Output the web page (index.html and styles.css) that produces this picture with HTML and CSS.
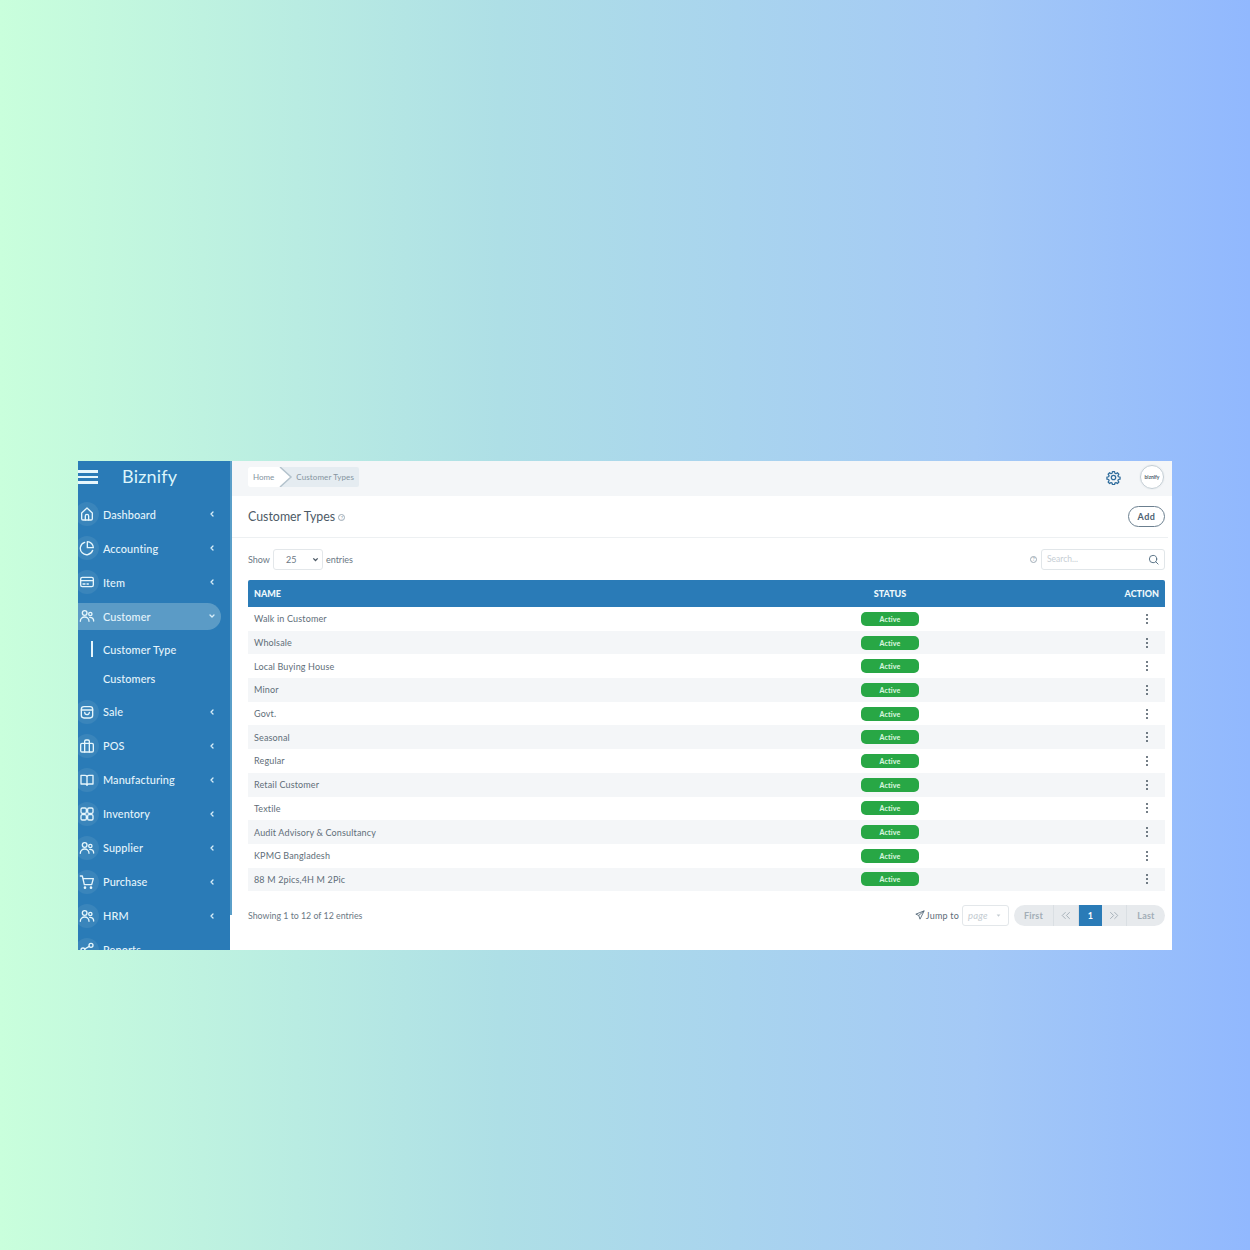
FILE: index.html
```html
<!DOCTYPE html>
<html lang="en">
<head>
<meta charset="utf-8">
<title>Biznify - Customer Types</title>
<link rel="stylesheet" href="styles.css">
</head>
<body>
<svg class="sprite" width="0" height="0" aria-hidden="true">
  <symbol id="i-home" viewBox="0 0 24 24"><path d="M4 10.500 12 3l8 7.500V19a2 2 0 0 1-2 2H6a2 2 0 0 1-2-2z"/><path d="M9.500 21v-6a2.500 2.500 0 0 1 5 0v6"/></symbol>
  <symbol id="i-pie" viewBox="0 0 24 24"><path d="M20.500 15.500A9.500 9.500 0 1 1 8.500 3.500"/><path d="M12.500 2.500a9 9 0 0 1 9 9h-9z"/></symbol>
  <symbol id="i-card" viewBox="0 0 24 24"><rect x="2.500" y="5" width="19" height="14" rx="2.500"/><path d="M2.500 10h19M6 15h3M12 15h2"/></symbol>
  <symbol id="i-users" viewBox="0 0 24 24"><circle cx="8.500" cy="7.500" r="3.500"/><path d="M2 20c0-4 3-6.500 6.500-6.500S15 16 15 20"/><circle cx="17" cy="9" r="2.500"/><path d="M16 14c3.500 0 6 2 6 5.500"/></symbol>
  <symbol id="i-bag" viewBox="0 0 24 24"><rect x="3.500" y="4" width="17" height="17" rx="4"/><path d="M3.500 9h17M8.500 12.500a3.500 3.500 0 0 0 7 0"/></symbol>
  <symbol id="i-case" viewBox="0 0 24 24"><rect x="2.500" y="8" width="19" height="13" rx="2"/><path d="M8.500 21V5a2 2 0 0 1 2-2h3a2 2 0 0 1 2 2v16"/></symbol>
  <symbol id="i-book" viewBox="0 0 24 24"><path d="M3 5h6a3 3 0 0 1 3 3v12a2.500 2.500 0 0 0-2.500-2H3zM21 5h-6a3 3 0 0 0-3 3v12a2.500 2.500 0 0 1 2.500-2H21z"/></symbol>
  <symbol id="i-grid" viewBox="0 0 24 24"><rect x="3" y="3" width="8" height="8" rx="2"/><rect x="13" y="3" width="8" height="8" rx="2"/><rect x="3" y="13" width="8" height="8" rx="2"/><rect x="13" y="13" width="8" height="8" rx="2"/></symbol>
  <symbol id="i-cart" viewBox="0 0 24 24"><path d="M2 3h3l3 13h11l2.500-9H6"/><circle cx="9" cy="20.500" r="1"/><circle cx="18" cy="20.500" r="1"/></symbol>
  <symbol id="i-share" viewBox="0 0 24 24"><circle cx="6" cy="12" r="3"/><circle cx="18" cy="5" r="3"/><circle cx="18" cy="19" r="3"/><path d="m8.500 10.500 7-4M8.500 13.500l7 4"/></symbol>
  <symbol id="i-chev" viewBox="0 0 8 8"><path d="M5 2 3 4l2 2"/></symbol>
</svg>

<div class="app">
  <aside class="sidebar">
    <div class="brand">
      <span class="burger"><i></i><i></i><i></i></span>
      <span class="brand-name">Biznify</span>
    </div>
    <nav class="menu">
      <a class="item"><span class="disc"><svg class="ico"><use href="#i-home"/></svg></span><span class="label">Dashboard</span><svg class="chev"><use href="#i-chev"/></svg></a>
      <a class="item"><span class="disc"><svg class="ico"><use href="#i-pie"/></svg></span><span class="label">Accounting</span><svg class="chev"><use href="#i-chev"/></svg></a>
      <a class="item"><span class="disc"><svg class="ico"><use href="#i-card"/></svg></span><span class="label">Item</span><svg class="chev"><use href="#i-chev"/></svg></a>
      <a class="item open"><span class="disc"><svg class="ico"><use href="#i-users"/></svg></span><span class="label">Customer</span><svg class="chev down"><use href="#i-chev"/></svg></a>
      <div class="subs">
        <a class="sub current"><span class="label">Customer Type</span></a>
        <a class="sub"><span class="label">Customers</span></a>
      </div>
      <a class="item"><span class="disc"><svg class="ico"><use href="#i-bag"/></svg></span><span class="label">Sale</span><svg class="chev"><use href="#i-chev"/></svg></a>
      <a class="item"><span class="disc"><svg class="ico"><use href="#i-case"/></svg></span><span class="label">POS</span><svg class="chev"><use href="#i-chev"/></svg></a>
      <a class="item"><span class="disc"><svg class="ico"><use href="#i-book"/></svg></span><span class="label">Manufacturing</span><svg class="chev"><use href="#i-chev"/></svg></a>
      <a class="item"><span class="disc"><svg class="ico"><use href="#i-grid"/></svg></span><span class="label">Inventory</span><svg class="chev"><use href="#i-chev"/></svg></a>
      <a class="item"><span class="disc"><svg class="ico"><use href="#i-users"/></svg></span><span class="label">Supplier</span><svg class="chev"><use href="#i-chev"/></svg></a>
      <a class="item"><span class="disc"><svg class="ico"><use href="#i-cart"/></svg></span><span class="label">Purchase</span><svg class="chev"><use href="#i-chev"/></svg></a>
      <a class="item"><span class="disc"><svg class="ico"><use href="#i-users"/></svg></span><span class="label">HRM</span><svg class="chev"><use href="#i-chev"/></svg></a>
      <a class="item"><span class="disc"><svg class="ico"><use href="#i-share"/></svg></span><span class="label">Reports</span></a>
    </nav>
  </aside>

  <main class="main">
    <header class="topbar">
      <div class="crumbs">
        <span class="crumb-home">Home</span>
        <svg class="crumb-arrow" viewBox="0 0 14 20"><path class="crumb-fill" d="M0 0h1l11 10L1 20H0z"/><path class="crumb-line" d="M1 0l11 10L1 20"/></svg>
        <span class="crumb-here">Customer Types</span>
      </div>
      <div class="top-actions">
        <svg class="gear" viewBox="0 0 24 24"><path d="M10.300 2.500h3.400l.5 2.700 1.700.7 2.300-1.500 2.400 2.400-1.500 2.300.7 1.700 2.700.5v3.400l-2.700.5-.7 1.700 1.500 2.300-2.400 2.400-2.300-1.500-1.700.7-.5 2.700h-3.400l-.5-2.700-1.700-.7-2.300 1.500-2.400-2.400 1.500-2.300-.7-1.700-2.700-.5v-3.400l2.700-.5.7-1.700-1.500-2.300 2.400-2.400 2.300 1.500 1.700-.7z"/><circle cx="12" cy="12" r="3.500"/></svg>
        <span class="avatar"><span class="avatar-text">biznify</span></span>
      </div>
    </header>

    <section class="title-row">
      <h1 class="title">Customer Types <span class="help help-title">?</span></h1>
      <button class="add">Add</button>
    </section>

    <section class="content">
      <div class="toolbar">
        <div class="length">
          <span>Show</span>
          <span class="select">25<svg class="select-chev" viewBox="0 0 8 8"><path d="M1.500 2.700 4 5.200l2.500-2.500"/></svg></span>
          <span>entries</span>
        </div>
        <div class="search-wrap">
          <span class="help help-search">?</span>
          <div class="search">
            <span class="placeholder">Search...</span>
            <svg class="search-ico" viewBox="0 0 24 24"><circle cx="11" cy="11" r="8"/><path d="m17 17 5 5"/></svg>
          </div>
        </div>
      </div>

      <div class="table">
        <div class="row head"><span>NAME</span><span class="center">STATUS</span><span class="right">ACTION</span></div>
        <div class="row"><span>Walk in Customer</span><span class="badge">Active</span><span class="dots"><i></i><i></i><i></i></span></div>
        <div class="row"><span>Wholsale</span><span class="badge">Active</span><span class="dots"><i></i><i></i><i></i></span></div>
        <div class="row"><span>Local Buying House</span><span class="badge">Active</span><span class="dots"><i></i><i></i><i></i></span></div>
        <div class="row"><span>Minor</span><span class="badge">Active</span><span class="dots"><i></i><i></i><i></i></span></div>
        <div class="row"><span>Govt.</span><span class="badge">Active</span><span class="dots"><i></i><i></i><i></i></span></div>
        <div class="row"><span>Seasonal</span><span class="badge">Active</span><span class="dots"><i></i><i></i><i></i></span></div>
        <div class="row"><span>Regular</span><span class="badge">Active</span><span class="dots"><i></i><i></i><i></i></span></div>
        <div class="row"><span>Retail Customer</span><span class="badge">Active</span><span class="dots"><i></i><i></i><i></i></span></div>
        <div class="row"><span>Textile</span><span class="badge">Active</span><span class="dots"><i></i><i></i><i></i></span></div>
        <div class="row"><span>Audit Advisory &amp; Consultancy</span><span class="badge">Active</span><span class="dots"><i></i><i></i><i></i></span></div>
        <div class="row"><span>KPMG Bangladesh</span><span class="badge">Active</span><span class="dots"><i></i><i></i><i></i></span></div>
        <div class="row"><span>88 M 2pics,4H M 2Pic</span><span class="badge">Active</span><span class="dots"><i></i><i></i><i></i></span></div>
      </div>

      <div class="footer">
        <span class="info">Showing 1 to 12 of 12 entries</span>
        <div class="paging">
          <svg class="plane" viewBox="0 0 24 24"><path d="M22 2 2 10l7 3 3 9z"/><path d="M22 2 9 13"/></svg>
          <span class="jump">Jump to</span>
          <span class="page-select">page<svg class="caret" viewBox="0 0 8 8"><path d="M1 2.500h6L4 6z"/></svg></span>
          <div class="pager">
            <span class="pg pg-first">First</span>
            <span class="pg pg-arrow"><svg class="dbl" viewBox="0 0 12 10"><path d="M5.500 1 1.500 5l4 4M10.500 1l-4 4 4 4"/></svg></span>
            <span class="pg pg-now">1</span>
            <span class="pg pg-arrow"><svg class="dbl" viewBox="0 0 12 10"><path d="M1.500 1l4 4-4 4M6.500 1l4 4-4 4"/></svg></span>
            <span class="pg pg-last">Last</span>
          </div>
        </div>
      </div>
    </section>
  </main>
</div>
</body>
</html>
```

FILE: styles.css
```css
* { box-sizing: border-box; }

html, body { height: 100%; }

body {
  margin: 0;
  padding: 461px 78px 0;
  background: linear-gradient(90deg, #c9ffdc 0%, #aedfe6 40%, #a4c9f6 78%, #91b8fe 100%);
  font-family: "Lato", "Noto Sans", sans-serif;
  color: #5d6b78;
}

.sprite { position: absolute; }

.app {
  display: flex;
  width: 1094px;
  height: 489px;
  overflow: hidden;
  background: #fff;
}

/* Sidebar */
.sidebar {
  flex: 0 0 154px;
  height: 489px;
  overflow: hidden;
  background: linear-gradient(#2a7bb7, #2a7bb7) 0 0 / 152px 100% no-repeat,
              linear-gradient(#5a9fc9, #5a9fc9) 0 0 / 154px 454px no-repeat;
  color: #e4f4fb;
}

.brand {
  display: flex;
  align-items: center;
  height: 32px;
  margin-bottom: 4px;
}

.burger {
  display: flex;
  flex-direction: column;
  gap: 3px;
  width: 20px;
}

.burger i {
  display: block;
  height: 2.500px;
  background: #e6f6fc;
}

.brand-name {
  margin: -2px 0 0 24px;
  font-size: 18px;
  letter-spacing: .2px;
  color: #dcf5fb;
}

.menu { width: 152px; }

.item {
  display: flex;
  align-items: center;
  height: 34px;
  width: 143px;
  font-size: 10.900px;
  font-weight: 500;
  letter-spacing: .1px;
}

.item.open {
  height: 27px;
  margin: 3.500px 0;
  background: #5b9bc6;
  border-radius: 0 14px 14px 0;
}

.disc {
  flex: 0 0 24px;
  display: flex;
  align-items: center;
  justify-content: center;
  width: 24px;
  height: 24px;
  margin-left: -3px;
  border-radius: 50%;
  background: #3a85bb;
}

.item.open .disc { background: transparent; }

.ico {
  width: 16px;
  height: 16px;
  fill: none;
  stroke: #e6f6fc;
  stroke-width: 2;
  stroke-linecap: round;
  stroke-linejoin: round;
}

.item .label { flex: 1; margin-left: 4px; }

.chev {
  width: 8px;
  height: 8px;
  margin-right: 5px;
  fill: none;
  stroke: #d8eef8;
  stroke-width: 1.300;
  stroke-linecap: round;
  stroke-linejoin: round;
}

.chev.down { transform: rotate(-90deg); }

.subs { padding: 1.500px 0 2px; }

.sub {
  display: flex;
  align-items: center;
  height: 29px;
  padding-left: 25px;
  font-size: 10.900px;
  font-weight: 500;
  letter-spacing: .1px;
  position: relative;
}

.current::before {
  content: "";
  position: absolute;
  left: 12.500px;
  top: 6.500px;
  width: 2px;
  height: 16px;
  background: #e6f6fc;
}

/* Main */
.main {
  flex: 1;
  display: flex;
  flex-direction: column;
  min-width: 0;
}

.topbar {
  display: flex;
  align-items: center;
  justify-content: space-between;
  height: 35px;
  padding: 0 8px 3px 16px;
  background: #f4f6f8;
}

.crumbs {
  display: flex;
  align-items: center;
  height: 20px;
  background: #e5ecf1;
  border-radius: 2px;
  font-size: 8px;
  color: #8494a0;
}

.crumb-home {
  display: flex;
  align-items: center;
  height: 100%;
  padding: 0 5px;
  background: #fff;
  border-radius: 2px 0 0 2px;
}

.crumb-arrow { width: 14px; height: 20px; margin-left: 0; }
.crumb-fill { fill: #fff; }
.crumb-line { fill: none; stroke: #b4c3cd; stroke-width: 1.500; }

.crumb-here { padding: 0 5px 0 3px; letter-spacing: .1px; }

.top-actions {
  display: flex;
  align-items: center;
  gap: 19px;
}

.gear {
  width: 15px;
  height: 15px;
  fill: none;
  stroke: #2f6c9c;
  stroke-width: 2;
  stroke-linejoin: round;
}

.avatar {
  display: flex;
  align-items: center;
  justify-content: center;
  width: 24px;
  height: 24px;
  border: 1px solid #c4ced5;
  border-radius: 50%;
  background: #fff;
  box-shadow: 0 0 0 1px #eef1f3;
}

.avatar-text {
  font-size: 5px;
  font-weight: 700;
  color: #4a5a68;
}

.title-row {
  display: flex;
  align-items: center;
  justify-content: space-between;
  height: 42px;
  margin-right: 4px;
  padding: 0 3px 0 16px;
  border-bottom: 1px solid #edf0f2;
}

.title {
  margin: 0;
  font-size: 12.400px;
  font-weight: 400;
  color: #4d5a66;
}

.help {
  display: inline-flex;
  align-items: center;
  justify-content: center;
  width: 7px;
  height: 7px;
  border: 1px solid #a0acb6;
  border-radius: 50%;
  font-size: 5px;
  color: #8a98a3;
  vertical-align: middle;
}

.add {
  width: 37px;
  height: 21px;
  padding: 0;
  border: 1px solid #6b7f8f;
  border-radius: 11px;
  background: #fff;
  font: 700 9px "Lato", sans-serif;
  letter-spacing: .5px;
  color: #4d6172;
}

.content {
  flex: 1;
  padding: 0 7px 0 16px;
}

.toolbar {
  display: flex;
  align-items: center;
  justify-content: space-between;
  height: 42px;
  font-size: 9px;
  color: #6b7884;
}

.length {
  display: flex;
  align-items: center;
  gap: 3px;
}

.select {
  display: flex;
  align-items: center;
  justify-content: space-between;
  width: 50px;
  height: 21px;
  padding: 0 3px 0 12px;
  border: 1px solid #e3e7ea;
  border-radius: 3px;
  background: #fff;
}

.select-chev {
  width: 7px;
  height: 7px;
  fill: none;
  stroke: #4d5a66;
  stroke-width: 1.500;
}

.search-wrap {
  display: flex;
  align-items: center;
  gap: 4px;
}

.search {
  display: flex;
  align-items: center;
  justify-content: space-between;
  width: 124px;
  height: 21px;
  padding: 0 5px;
  border: 1px solid #e1e6e9;
  border-radius: 3px;
}

.placeholder { font-size: 8.500px; color: #c6ced4; }

.search-ico {
  width: 11px;
  height: 11px;
  fill: none;
  stroke: #4f6a7f;
  stroke-width: 2;
  stroke-linecap: round;
}

/* Table */
.row {
  display: grid;
  grid-template-columns: 607px 58px 1fr;
  align-items: center;
  height: 23.700px;
  padding: 0 6px;
  font-size: 9px;
  letter-spacing: .15px;
  color: #616e79;
}

.row:nth-child(odd) { background: #f4f6f8; }
.row:nth-child(even) { background: #fff; }

.row.head {
  height: 27px;
  background: #2a7bb7;
  border-radius: 2px 2px 0 0;
  font-weight: 900;
  letter-spacing: 0;
  color: #eef8fc;
}

.center { text-align: center; }
.right { text-align: right; }

.badge {
  display: flex;
  align-items: center;
  justify-content: center;
  height: 14px;
  border-radius: 5px;
  background: #28a745;
  font-size: 7px;
  font-weight: 900;
  color: #d6f5de;
}

.dots {
  display: flex;
  flex-direction: column;
  align-items: flex-end;
  gap: 2px;
  padding-right: 11px;
}

.dots i {
  display: block;
  width: 2px;
  height: 2px;
  border-radius: 50%;
  background: #46535f;
}

/* Footer */
.footer {
  display: flex;
  align-items: center;
  justify-content: space-between;
  height: 48px;
  font-size: 8.800px;
  color: #6b7884;
}

.paging {
  display: flex;
  align-items: center;
  font-size: 9px;
  letter-spacing: .2px;
}

.plane {
  width: 10px;
  height: 10px;
  fill: none;
  stroke: #4d6172;
  stroke-width: 2;
  stroke-linejoin: round;
}

.jump { margin: 0 3px 0 1px; color: #5d6b78; }

.page-select {
  display: flex;
  align-items: center;
  justify-content: space-between;
  width: 47px;
  height: 21px;
  margin-right: 5px;
  padding: 0 7px 0 5px;
  border: 1px solid #e3e7ea;
  border-radius: 3px;
  font-size: 9.500px;
  font-style: italic;
  color: #c3cbd1;
}

.caret { width: 5px; height: 5px; fill: #c3cbd1; }

.pager {
  display: flex;
  height: 21px;
  overflow: hidden;
  border-radius: 11px;
  background: #e7eaed;
  font-size: 9px;
  font-weight: 700;
  color: #a2adb6;
}

.pg {
  display: flex;
  align-items: center;
  justify-content: center;
  border-right: 1px solid #dadfe3;
}

.pg-first { width: 40px; }
.pg-arrow { width: 25px; }
.pg-now { width: 23px; border: 0; background: #2a7bb7; color: #fff; }
.pg-last { width: 38px; border: 0; }

.dbl {
  width: 10px;
  height: 9px;
  fill: none;
  stroke: #a2adb6;
  stroke-width: 1.100;
}
```
